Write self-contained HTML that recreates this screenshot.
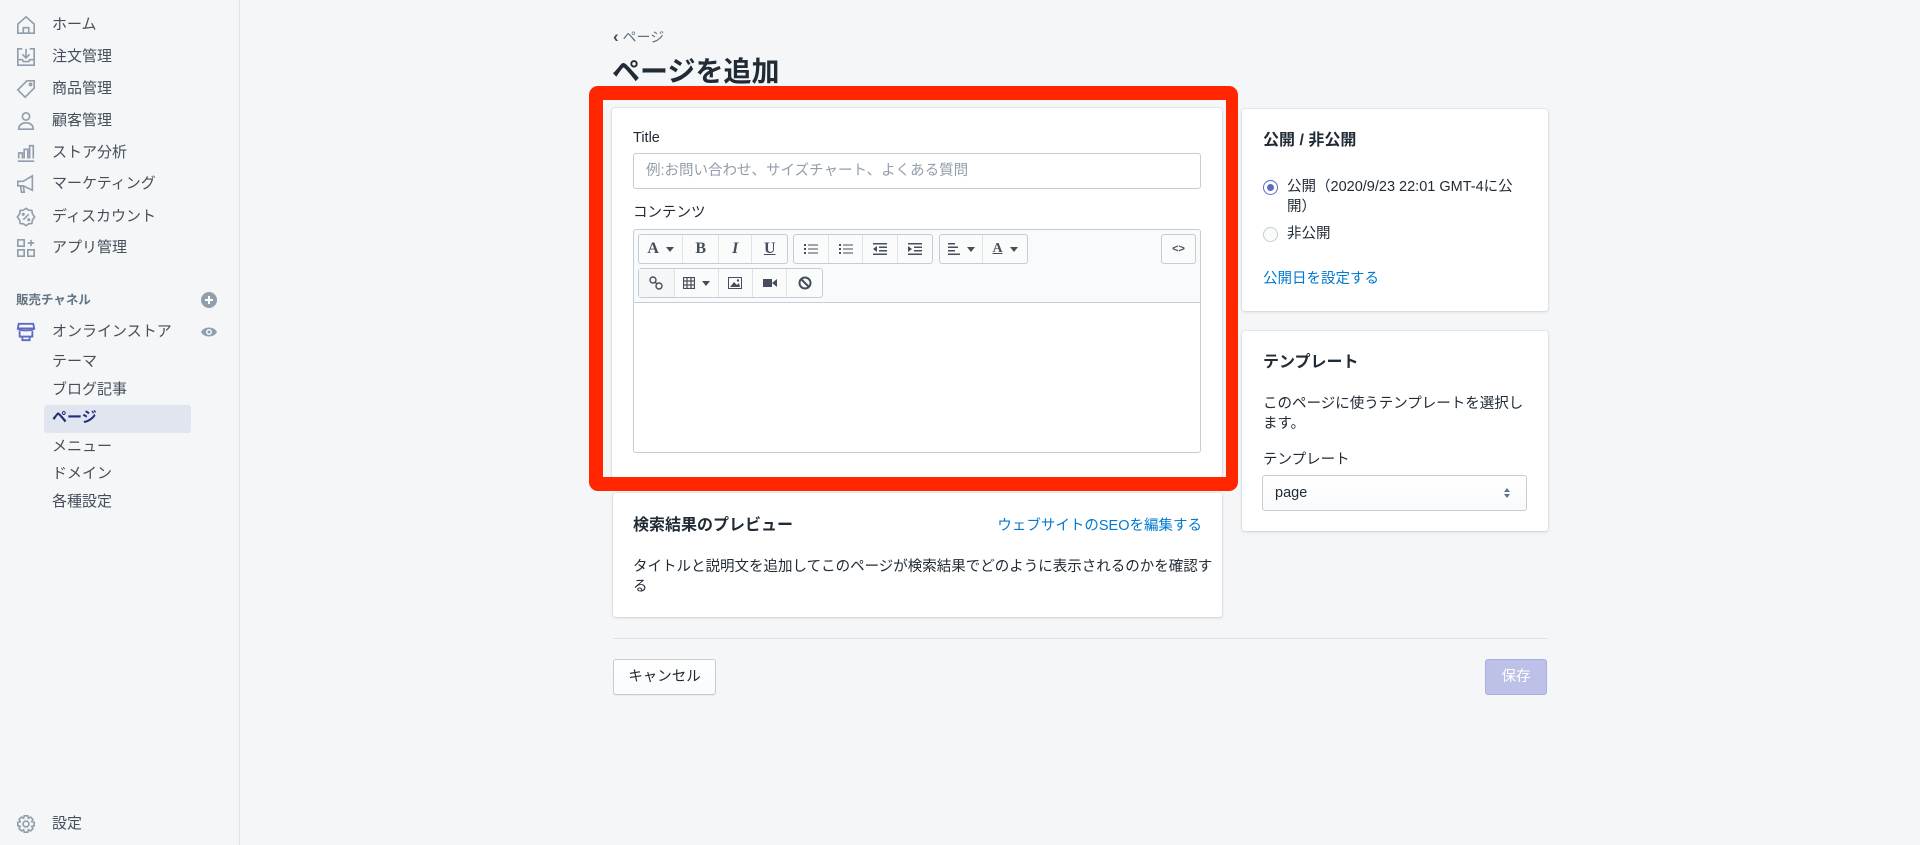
<!DOCTYPE html>
<html><head><meta charset="utf-8">
<style>
*{box-sizing:border-box;margin:0;padding:0}
body{width:1920px;height:845px;overflow:hidden;background:#f4f6f8;font-family:"Liberation Sans","Noto Sans CJK JP",sans-serif;color:#212b36;position:relative}
.a{position:absolute}
.side{left:0;top:0;width:240px;height:845px;background:#f4f6f8;border-right:1px solid #dfe3e8}
.nav{left:52px;font-size:15px;color:#454f5b;line-height:20px;transform:translateY(-10px)}
.ic{left:16px;width:20px;height:20px;transform:translateY(-10px)}
.sub{left:52px;font-size:15px;color:#454f5b;line-height:20px;transform:translateY(-10px)}
.card{background:#fff;border-radius:3px;box-shadow:0 0 0 1px rgba(63,63,68,.06),0 1px 3px 0 rgba(63,63,68,.15)}
.lbl{font-size:14.5px;color:#212b36;line-height:20px}
.tb{position:absolute;height:30px;border:1px solid #c4cdd5;border-radius:3px;background:#fafbfb;display:flex}
.tb div{height:28px;border-right:1px solid #dfe3e8;display:flex;align-items:center;justify-content:center;color:#454f5b;font-family:"Liberation Serif",serif;font-size:16px;font-weight:bold}
.tb div:last-child{border-right:none}
.car{display:inline-block;border-left:4px solid transparent;border-right:4px solid transparent;border-top:5px solid #454f5b;margin-left:7px}
</style></head><body>

<div class="a side"></div>
<svg class="a ic" style="top:25px" viewBox="0 0 22 22" fill="none" stroke="#919eab" stroke-width="1.8"><path d="M2 10 L11 2 L20 10 V20 H2 Z"/><path d="M8 20 V14 H14 V20"/></svg>
<svg class="a ic" style="top:57px" viewBox="0 0 22 22" fill="none" stroke="#919eab" stroke-width="1.8"><path d="M7 2H2V20H20V2H15"/><path d="M11 2V12M7 8l4 4 4-4M2 14H7L8 16H14L15 14H20"/></svg>
<svg class="a ic" style="top:89px" viewBox="0 0 22 22" fill="none" stroke="#919eab" stroke-width="1.8"><path d="M12 2H20V10L10 20L2 12Z"/><circle cx="16" cy="6" r="1.2"/></svg>
<svg class="a ic" style="top:121px" viewBox="0 0 22 22" fill="none" stroke="#919eab" stroke-width="1.8"><circle cx="11" cy="6" r="4"/><path d="M3 20C3 15 7 13 11 13S19 15 19 20Z"/></svg>
<svg class="a ic" style="top:153px" viewBox="0 0 22 22" fill="none" stroke="#919eab" stroke-width="1.8"><path d="M2 20H20M3 17V11H7V17M9 17V7H13V17M15 17V3H19V17"/></svg>
<svg class="a ic" style="top:184px" viewBox="0 0 22 22" fill="none" stroke="#919eab" stroke-width="1.8"><path d="M2 8H8L18 2V18L8 13H2Z"/><path d="M5 13L6 20H9L8 13"/></svg>
<svg class="a ic" style="top:217px" viewBox="0 0 22 22" fill="none" stroke="#919eab" stroke-width="1.8"><path d="M11 1.5L14 3.5L17.5 3.8L18 7.5L20.5 11L18 14.5L17.5 18.2L14 18.5L11 20.5L8 18.5L4.5 18.2L4 14.5L1.5 11L4 7.5L4.5 3.8L8 3.5Z"/><path d="M8 14L14 8"/><circle cx="8" cy="8" r=".8"/><circle cx="14" cy="14" r=".8"/></svg>
<svg class="a ic" style="top:248px" viewBox="0 0 22 22" fill="none" stroke="#919eab" stroke-width="1.8"><rect x="2" y="2" width="7" height="7"/><rect x="2" y="13" width="7" height="7"/><rect x="13" y="13" width="7" height="7"/><path d="M16.5 2V9M13 5.5H20"/></svg>

<div class="a nav" style="top:25px">ホーム</div>
<div class="a nav" style="top:57px">注文管理</div>
<div class="a nav" style="top:89px">商品管理</div>
<div class="a nav" style="top:121px">顧客管理</div>
<div class="a nav" style="top:153px">ストア分析</div>
<div class="a nav" style="top:184px">マーケティング</div>
<div class="a nav" style="top:217px">ディスカウント</div>
<div class="a nav" style="top:248px">アプリ管理</div>

<div class="a" style="left:16px;top:292px;font-size:12.5px;color:#637381;font-weight:bold;line-height:16px">販売チャネル</div>
<svg class="a" style="left:201px;top:292px" width="16" height="16" viewBox="0 0 16 16"><circle cx="8" cy="8" r="8" fill="#919eab"/><path d="M8 4V12M4 8H12" stroke="#fff" stroke-width="2"/></svg>
<svg class="a" style="left:16px;top:322px" width="20" height="20" viewBox="0 0 22 22" fill="none" stroke="#5c6ac4" stroke-width="2"><path d="M3 2H19L20 7H2Z"/><path d="M2 7C2 10 20 10 20 7"/><path d="M4 10V16H18V10"/><path d="M7 16V20H15V16"/></svg>
<div class="a nav" style="top:332px">オンラインストア</div>
<svg class="a" style="left:200px;top:325px" width="18" height="14" viewBox="0 0 18 14"><path d="M1 7C4 1 14 1 17 7C14 13 4 13 1 7Z" fill="#919eab"/><circle cx="9" cy="7" r="3" fill="#f4f6f8"/><circle cx="9" cy="7" r="1.5" fill="#919eab"/></svg>

<div class="a" style="left:44px;top:405px;width:147px;height:28px;background:#e1e5f0;border-radius:3px"></div>
<div class="a sub" style="top:362px">テーマ</div>
<div class="a sub" style="top:390px">ブログ記事</div>
<div class="a sub" style="top:418px;color:#202e78;font-weight:bold">ページ</div>
<div class="a sub" style="top:447px">メニュー</div>
<div class="a sub" style="top:474px">ドメイン</div>
<div class="a sub" style="top:502px">各種設定</div>

<svg class="a ic" style="top:824px" viewBox="0 0 22 22" fill="none" stroke="#919eab" stroke-width="1.8"><circle cx="11" cy="11" r="3.2"/><path d="M9 2H13L13.6 4.6L16 3.4L18.6 6L17.4 8.4L20 9V13L17.4 13.6L18.6 16L16 18.6L13.6 17.4L13 20H9L8.4 17.4L6 18.6L3.4 16L4.6 13.6L2 13V9L4.6 8.4L3.4 6L6 3.4L8.4 4.6Z"/></svg>
<div class="a nav" style="top:824px">設定</div>

<div class="a" style="left:613px;top:28px;font-size:14px;color:#637381;line-height:18px"><span style="font-size:17px;color:#454f5b;font-weight:bold">‹</span> ページ</div>
<div class="a" style="left:612px;top:53px;font-size:28px;font-weight:bold;line-height:38px;color:#212b36">ページを追加</div>

<div class="a card" style="left:612px;top:108px;width:610px;height:370px"></div>
<div class="a lbl" style="left:633px;top:128px">Title</div>
<div class="a" style="left:633px;top:153px;width:568px;height:36px;border:1px solid #c4cdd5;border-radius:3px;background:#fff;font-size:14.5px;color:#919eab;line-height:34px;padding-left:12px">例:お問い合わせ、サイズチャート、よくある質問</div>
<div class="a lbl" style="left:633px;top:203px">コンテンツ</div>
<div class="a" style="left:633px;top:229px;width:568px;height:224px;border:1px solid #c4cdd5;border-radius:3px;background:#fff;overflow:hidden"><div style="height:73px;background:#f9fafb;border-bottom:1px solid #c4cdd5"></div></div>

<div class="tb" style="left:638px;top:234px;width:150px">
<div style="width:45px">A<span class="car"></span></div><div style="width:36px">B</div><div style="width:34px;font-style:italic">I</div><div style="width:35px;text-decoration:underline">U</div></div>
<div class="tb" style="left:793px;top:234px;width:140px">
<div style="width:36px"><svg width="14" height="12"><g fill="#454f5b"><rect x="0" y="1" width="2" height="2"/><rect x="0" y="5" width="2" height="2"/><rect x="0" y="9" width="2" height="2"/><rect x="4" y="1.5" width="10" height="1"/><rect x="4" y="5.5" width="10" height="1"/><rect x="4" y="9.5" width="10" height="1"/></g></svg></div>
<div style="width:34px"><svg width="14" height="12"><g fill="#454f5b"><rect x="0" y="1" width="2" height="2"/><rect x="0" y="5" width="2" height="2"/><rect x="0" y="9" width="2" height="2"/><rect x="4" y="1.5" width="10" height="1"/><rect x="4" y="5.5" width="10" height="1"/><rect x="4" y="9.5" width="10" height="1"/></g></svg></div>
<div style="width:35px"><svg width="14" height="12"><g fill="#454f5b"><rect x="0" y="0" width="14" height="1.5"/><rect x="6" y="3.5" width="8" height="1.5"/><rect x="6" y="7" width="8" height="1.5"/><rect x="0" y="10.5" width="14" height="1.5"/><path d="M4 3L0 6L4 9Z"/></g></svg></div>
<div style="width:35px"><svg width="14" height="12"><g fill="#454f5b"><rect x="0" y="0" width="14" height="1.5"/><rect x="6" y="3.5" width="8" height="1.5"/><rect x="6" y="7" width="8" height="1.5"/><rect x="0" y="10.5" width="14" height="1.5"/><path d="M0 3L4 6L0 9Z"/></g></svg></div></div>
<div class="tb" style="left:939px;top:234px;width:89px">
<div style="width:44px"><svg width="12" height="12"><g fill="#454f5b"><rect x="0" y="0" width="7" height="1.5"/><rect x="0" y="3.5" width="10" height="1.5"/><rect x="0" y="7" width="7" height="1.5"/><rect x="0" y="10.5" width="12" height="1.5"/></g></svg><span class="car"></span></div>
<div style="width:45px;font-size:14px"><span style="text-decoration:underline">A</span><span class="car"></span></div></div>
<div class="tb" style="left:1161px;top:234px;width:35px"><div style="width:33px;font-family:'Liberation Sans',sans-serif;font-size:11px">&lt;&gt;</div></div>

<div class="tb" style="left:638px;top:268px;width:185px">
<div style="width:36px;background:#f4f6f8"><svg width="14" height="14" fill="none" stroke="#454f5b" stroke-width="1.4"><circle cx="4" cy="4" r="3"/><circle cx="10" cy="10" r="3"/><path d="M6 6L8 8"/></svg></div>
<div style="width:45px"><svg width="12" height="12" fill="none" stroke="#454f5b" stroke-width="1.2"><rect x=".5" y=".5" width="11" height="11"/><path d="M4 0V12M8 0V12M0 4H12M0 8H12"/></svg><span class="car"></span></div>
<div style="width:34px"><svg width="14" height="12"><rect x=".5" y=".5" width="13" height="11" fill="none" stroke="#454f5b"/><path d="M2 10L6 5L9 8L11 6L12 10Z" fill="#454f5b"/><circle cx="10" cy="3.5" r="1.2" fill="#454f5b"/></svg></div>
<div style="width:35px"><svg width="14" height="10"><rect x="0" y="1" width="9" height="8" fill="#454f5b"/><path d="M9 5L14 1V9Z" fill="#454f5b"/></svg></div>
<div style="width:35px"><svg width="14" height="14" fill="none" stroke="#454f5b" stroke-width="2"><circle cx="7" cy="7" r="5.5"/><path d="M3 3L11 11"/></svg></div></div>

<div class="a" style="left:589px;top:86px;width:649px;height:405px;border:14px solid #ff2600;border-right-width:12px;border-radius:9px"></div>

<div class="a card" style="left:613px;top:493px;width:609px;height:124px"></div>
<div class="a" style="left:633px;top:515px;font-size:16px;font-weight:bold;line-height:22px">検索結果のプレビュー</div>
<div class="a" style="right:718px;top:516px;font-size:14.5px;color:#007ace;line-height:20px">ウェブサイトのSEOを編集する</div>
<div class="a" style="left:633px;top:558px;width:592px;font-size:14.5px;line-height:19.5px;color:#212b36">タイトルと説明文を追加してこのページが検索結果でどのように表示されるのかを確認する</div>

<div class="a card" style="left:1242px;top:109px;width:306px;height:202px"></div>
<div class="a" style="left:1263px;top:130px;font-size:16px;font-weight:bold;line-height:22px">公開 / 非公開</div>
<div class="a" style="left:1263px;top:180px;width:15px;height:15px;border-radius:50%;border:1.5px solid #5c6ac4;background:#fff"><div style="position:absolute;left:2.5px;top:2.5px;width:7px;height:7px;border-radius:50%;background:#5c6ac4"></div></div>
<div class="a" style="left:1287px;top:177px;width:240px;font-size:14.5px;line-height:20px">公開（2020/9/23 22:01 GMT-4に公開）</div>
<div class="a" style="left:1263px;top:227px;width:15px;height:15px;border-radius:50%;border:1px solid #c4cdd5;background:#fafbfb"></div>
<div class="a" style="left:1287px;top:224px;font-size:14.5px;line-height:20px">非公開</div>
<div class="a" style="left:1263px;top:269px;font-size:14.5px;color:#007ace;line-height:20px">公開日を設定する</div>

<div class="a card" style="left:1242px;top:331px;width:306px;height:200px"></div>
<div class="a" style="left:1263px;top:352px;font-size:16px;font-weight:bold;line-height:22px">テンプレート</div>
<div class="a" style="left:1263px;top:395px;width:270px;font-size:14.5px;line-height:19.5px">このページに使うテンプレートを選択します。</div>
<div class="a" style="left:1263px;top:450px;font-size:14.5px;line-height:20px">テンプレート</div>
<div class="a" style="left:1262px;top:475px;width:265px;height:36px;border:1px solid #c4cdd5;border-radius:3px;background:linear-gradient(#fff,#f9fafb);font-size:14.5px;line-height:34px;padding-left:12px">page</div>
<svg class="a" style="left:1503px;top:487px" width="8" height="12"><path d="M1 5L4 1L7 5Z M1 7L4 11L7 7Z" fill="#637381"/></svg>

<div class="a" style="left:613px;top:638px;width:935px;height:1px;background:#dfe3e8"></div>
<div class="a" style="left:613px;top:659px;width:103px;height:36px;border:1px solid #c4cdd5;border-radius:3px;background:linear-gradient(#fff,#f9fafb);box-shadow:0 1px 0 rgba(22,29,37,.05);font-size:14.5px;line-height:34px;text-align:center;color:#212b36">キャンセル</div>
<div class="a" style="left:1485px;top:659px;width:62px;height:36px;border:1px solid #a7afe3;border-radius:3px;background:#bdc1e8;font-size:14.5px;line-height:34px;text-align:center;color:#fff">保存</div>

</body></html>
